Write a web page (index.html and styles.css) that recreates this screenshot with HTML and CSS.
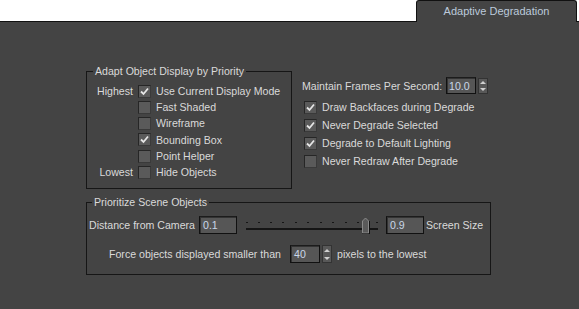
FILE: index.html
```html
<!DOCTYPE html>
<html lang="en">
<head>
    <meta charset="UTF-8">
    <title>Adaptive Degradation</title>
    <link rel="stylesheet" href="styles.css">
</head>
<body>
    <div class="topbar">
        <div class="tab">Adaptive Degradation</div>
    </div>
    <div class="panel">
        <div class="upper">
            <fieldset class="group priority">
                <legend>Adapt Object Display by Priority</legend>
                <div class="prow"><span class="rank">Highest</span><span class="check on"><svg viewBox="0 0 11 11"><polyline points="2,5.5 4.5,8 9,2.5"/></svg></span><span>Use Current Display Mode</span></div>
                <div class="prow"><span class="rank"></span><span class="check"></span><span>Fast Shaded</span></div>
                <div class="prow"><span class="rank"></span><span class="check"></span><span>Wireframe</span></div>
                <div class="prow"><span class="rank"></span><span class="check on"><svg viewBox="0 0 11 11"><polyline points="2,5.5 4.5,8 9,2.5"/></svg></span><span>Bounding Box</span></div>
                <div class="prow"><span class="rank"></span><span class="check"></span><span>Point Helper</span></div>
                <div class="prow"><span class="rank">Lowest</span><span class="check"></span><span>Hide Objects</span></div>
            </fieldset>
            <div class="options">
                <div class="fps">
                    <span class="fps-label">Maintain Frames Per Second:</span>
                    <span class="field fps-field">10.0</span>
                    <span class="spin"><i class="up"></i><i class="down"></i></span>
                </div>
                <div class="orow"><span class="check on"><svg viewBox="0 0 11 11"><polyline points="2,5.5 4.5,8 9,2.5"/></svg></span><span>Draw Backfaces during Degrade</span></div>
                <div class="orow"><span class="check on"><svg viewBox="0 0 11 11"><polyline points="2,5.5 4.5,8 9,2.5"/></svg></span><span>Never Degrade Selected</span></div>
                <div class="orow"><span class="check on"><svg viewBox="0 0 11 11"><polyline points="2,5.5 4.5,8 9,2.5"/></svg></span><span>Degrade to Default Lighting</span></div>
                <div class="orow"><span class="check"></span><span>Never Redraw After Degrade</span></div>
            </div>
        </div>
        <fieldset class="group scene">
            <legend>Prioritize Scene Objects</legend>
            <div class="srow">
                <span class="dist-label">Distance from Camera</span>
                <span class="field near">0.1</span>
                <svg class="slider" width="132" height="18" viewBox="0 0 132 18">
                    <g fill="#151515">
                        <rect x="0" y="6" width="2" height="1"/>
                        <rect x="12" y="6" width="2" height="1"/>
                        <rect x="24" y="6" width="2" height="1"/>
                        <rect x="36" y="6" width="2" height="1"/>
                        <rect x="49" y="6" width="2" height="1"/>
                        <rect x="61" y="6" width="2" height="1"/>
                        <rect x="74" y="6" width="2" height="1"/>
                        <rect x="86" y="6" width="2" height="1"/>
                        <rect x="99" y="6" width="2" height="1"/>
                        <rect x="111" y="6" width="2" height="1"/>
                        <rect x="130" y="6" width="2" height="1"/>
                        <rect x="0" y="12" width="132" height="2"/>
                    </g>
                    <path d="M116.5 5 L119.5 2 L122.5 5 L122.5 17 L116.5 17 Z" fill="#5a5a5a" stroke="#8a8a8a" stroke-width="1"/>
                    <path d="M123.5 5 L123.5 18 L116 18" fill="none" stroke="#111" stroke-width="1"/>
                </svg>
                <span class="field far">0.9</span>
                <span class="size-label">Screen Size</span>
            </div>
            <div class="srow force">
                <span class="force-label">Force objects displayed smaller than</span>
                <span class="field px-field">40</span>
                <span class="spin"><i class="up"></i><i class="down"></i></span>
                <span class="px-label">pixels to the lowest</span>
            </div>
        </fieldset>
    </div>
</body>
</html>
```

FILE: styles.css
```css
html, body {
    margin: 0;
    padding: 0;
    height: 100%;
}
body {
    font-family: 'Liberation Sans', Arial, sans-serif;
    font-size: 10.6px;
    color: #dadada;
    background-color: #444444;
    white-space: nowrap;
}
.topbar {
    height: 21px;
    background: #fff;
    border-bottom: 1px solid #111;
    display: flex;
    justify-content: flex-end;
    align-items: flex-end;
}
.tab {
    width: 159px;
    height: 21px;
    margin-right: 2px;
    margin-bottom: -1px;
    background: #444444;
    border: 1px solid #111;
    border-bottom: none;
    border-radius: 3px 3px 0 0;
    color: #bccadb;
    font-size: 11px;
    line-height: 21px;
    text-align: center;
    box-sizing: content-box;
}
.panel {
    padding: 42px 0 0 86px;
}
.upper {
    display: flex;
    align-items: flex-start;
    gap: 10px;
}
/* Group boxes */
.group {
    margin: 0;
    border: 1px solid #161616;
    min-width: 0;
}
.group legend {
    padding: 0 2px;
    line-height: 14px;
}
.priority {
    width: 206px;
    box-sizing: border-box;
    padding: 5px 0 8px 6px;
}
.prow {
    display: flex;
    align-items: center;
    height: 16px;
}
.prow:nth-of-type(4) {
    height: 17px;
}
.rank {
    width: 40px;
    text-align: right;
    margin-right: 5px;
}
/* Check boxes */
.check {
    width: 11px;
    height: 11px;
    background: #5a5a5a;
    border: 1px solid #262626;
    border-right-color: #3a3a3a;
    border-bottom-color: #3a3a3a;
    margin-right: 5px;
    flex: none;
    display: flex;
}
.check svg {
    width: 11px;
    height: 11px;
    fill: none;
    stroke: #e6e6e6;
    stroke-width: 1.8;
}
/* Right column */
.options {
    padding-top: 13px;
}
.fps {
    display: flex;
    align-items: center;
    height: 17px;
    margin-bottom: 4px;
}
.fps-label {
    width: 144px;
}
.field {
    box-sizing: border-box;
    background: #565656;
    border: 1px solid #111;
    border-top-color: #1c1c1c;
    box-shadow: inset 1px 1px 0 #333;
    color: #c9d7e8;
    padding-left: 3px;
    display: flex;
    align-items: center;
}
.fps-field {
    width: 30px;
    height: 17px;
    padding-left: 2px;
}
.spin {
    width: 10px;
    height: 16px;
    margin-left: 2px;
    background: #585858;
    border: 1px solid #333;
    box-sizing: border-box;
    display: flex;
    flex-direction: column;
    justify-content: space-around;
    align-items: center;
}
.spin i {
    width: 0;
    height: 0;
    border-left: 3px solid transparent;
    border-right: 3px solid transparent;
}
.spin .up {
    border-bottom: 3px solid #d0d0d0;
}
.spin .down {
    border-top: 3px solid #d0d0d0;
}
.orow {
    display: flex;
    align-items: center;
    height: 18px;
    padding-left: 2px;
}
/* Scene group */
.scene {
    width: 405px;
    box-sizing: border-box;
    margin-top: 6px;
    padding: 7px 0 11px 2px;
}
.scene legend {
    margin-left: 3px;
}
.srow {
    display: flex;
    align-items: center;
    height: 18px;
}
.dist-label {
    width: 110px;
}
.near, .far {
    width: 38px;
    height: 18px;
}
.slider {
    margin: 0 8px 0 9px;
    display: block;
}
.size-label {
    margin-left: 2px;
}
.force {
    margin-top: 11px;
    padding-left: 20px;
}
.force-label {
    width: 181px;
}
.px-field {
    width: 30px;
    height: 18px;
}
.force .spin {
    height: 18px;
}
.px-label {
    margin-left: 5px;
}
```
